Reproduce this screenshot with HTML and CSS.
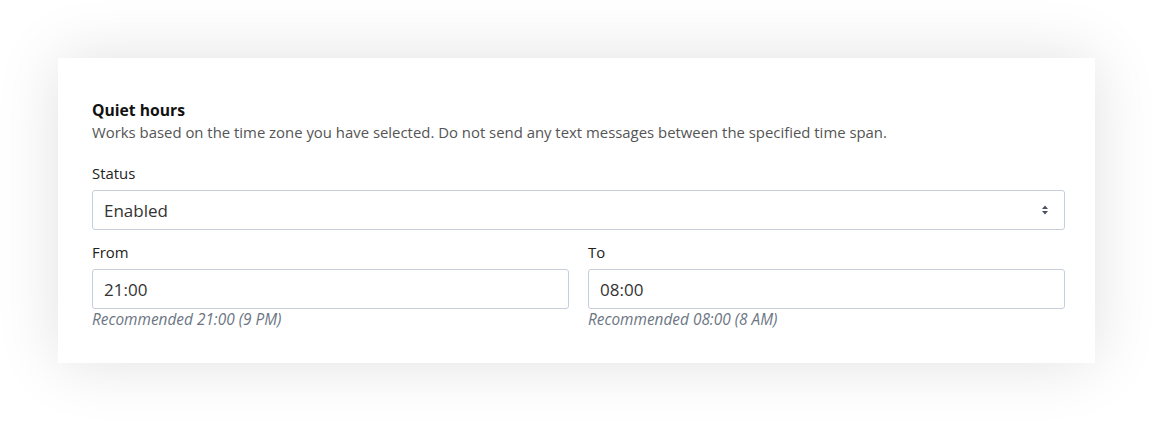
FILE: index.html
```html
<!DOCTYPE html>
<html>
<head>
<meta charset="utf-8">
<link rel="stylesheet" href="styles.css">
</head>
<body>
<div class="card">
  <h2 class="title">Quiet hours</h2>
  <p class="desc">Works based on the time zone you have selected. Do not send any text messages between the specified time span.</p>
  <div class="field">
    <label class="label">Status</label>
    <div class="select">
      <span>Enabled</span>
      <svg class="caret" width="8" height="12" viewBox="0 0 8 12"><path d="M4 1.5 L7 5 H1 Z M4 10.5 L7 7 H1 Z" fill="#4a5360"/></svg>
    </div>
  </div>
  <div class="row">
    <div class="field col">
      <label class="label">From</label>
      <div class="input">21:00</div>
      <div class="hint">Recommended 21:00 (9 PM)</div>
    </div>
    <div class="field col">
      <label class="label">To</label>
      <div class="input">08:00</div>
      <div class="hint">Recommended 08:00 (8 AM)</div>
    </div>
  </div>
</div>
</body>
</html>
```

FILE: styles.css
```css
html, body { margin: 0; padding: 0; background: #fff; }
body {
  font-family: "Open Sans", "Noto Sans", sans-serif;
  color: #212529;
  padding: 58px 58px 59px 58px;
}
.card {
  background: #fff;
  box-shadow: 0 0 60px rgba(0,0,0,0.12);
  padding: 41px 30px 32px 34px;
}
.title {
  margin: 0;
  font-size: 15.7px;
  font-weight: 700;
  line-height: 22px;
  color: #111;
}
.desc {
  margin: 0 0 19px 0;
  font-size: 14.9px;
  line-height: 23px;
  color: #555;
}
.field { display: flex; flex-direction: column; }
.label {
  font-size: 14.9px;
  line-height: 20px;
  margin-bottom: 7px;
  color: #222;
}
.select, .input {
  height: 40px;
  box-sizing: border-box;
  border: 1px solid #c6cfd9;
  border-radius: 3px;
  padding: 0 12px 0 11px;
  font-size: 17px;
  color: #333;
  display: flex;
  align-items: center;
}
.select { justify-content: space-between; margin-bottom: 12px; }
.caret { margin-right: 3px; }
.row { display: flex; gap: 19px; }
.col { flex: 1; }
.hint {
  font-size: 15.4px;
  font-style: italic;
  color: #6c7683;
  line-height: 22px;
}
```
